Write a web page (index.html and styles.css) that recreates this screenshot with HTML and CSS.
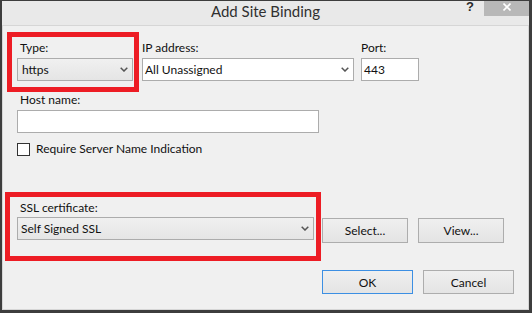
FILE: index.html
```html
<!DOCTYPE html>
<html lang="en">
<head>
    <meta charset="UTF-8">
    <meta name="viewport" content="width=device-width, initial-scale=1.0">
    <title>Add Site Binding</title>
    <link rel="stylesheet" href="styles.css">
</head>
<body>

    <div class="window">
        <div class="titlebar">
            <span></span>
            <div class="title">Add Site Binding</div>
            <div class="caption-buttons">
                <span class="help">?</span>
                <span class="close">
                    <svg width="8" height="8" viewBox="0 0 8 8">
                        <path d="M0.5 0.5 L7.5 7.5 M7.5 0.5 L0.5 7.5" stroke="#fff" stroke-width="1.6" fill="none"/>
                    </svg>
                </span>
            </div>
        </div>

        <div class="content">
            <div class="row-top">
                <div class="highlight type-box">
                    <div class="field-label">Type:</div>
                    <div class="combo combo-gray type-combo">
                        <span>https</span>
                        <svg class="chevron" width="8" height="5" viewBox="0 0 8 5"><polyline points="0.7,0.7 4,4 7.3,0.7" fill="none" stroke="#555" stroke-width="1.5"/></svg>
                    </div>
                </div>
                <div class="field ip-field">
                    <div class="field-label flush">IP address:</div>
                    <div class="combo combo-white ip-combo">
                        <span>All Unassigned</span>
                        <svg class="chevron" width="8" height="5" viewBox="0 0 8 5"><polyline points="0.7,0.7 4,4 7.3,0.7" fill="none" stroke="#555" stroke-width="1.5"/></svg>
                    </div>
                </div>
                <div class="field port-field">
                    <div class="field-label flush">Port:</div>
                    <div class="textbox port-input">443</div>
                </div>
            </div>

            <div class="host">
                <div class="field-label">Host name:</div>
                <div class="textbox host-input"></div>
            </div>

            <div class="check">
                <span class="checkbox"></span>
                <span class="check-text">Require Server Name Indication</span>
            </div>

            <div class="row-ssl">
                <div class="highlight ssl-box">
                    <div class="field-label">SSL certificate:</div>
                    <div class="combo combo-gray ssl-combo">
                        <span>Self Signed SSL</span>
                        <svg class="chevron" width="8" height="5" viewBox="0 0 8 5"><polyline points="0.7,0.7 4,4 7.3,0.7" fill="none" stroke="#555" stroke-width="1.5"/></svg>
                    </div>
                </div>
                <button class="btn btn-side">Select...</button>
                <button class="btn btn-side">View...</button>
            </div>

            <div class="row-actions">
                <button class="btn btn-action default">OK</button>
                <button class="btn btn-action">Cancel</button>
            </div>
        </div>
    </div>

</body>
</html>
```

FILE: styles.css
```css
body {
    margin: 0;
    padding: 0;
    background-color: #3d3d3d;
    font-family: 'Lato', 'Liberation Sans', sans-serif;
    font-size: 12px;
    color: #111;
}
.window {
    width: 532px;
    height: 313px;
    box-sizing: border-box;
    border-style: solid;
    border-color: #3d3d3d;
    border-width: 1px 3px 3px 2px;
    display: flex;
    flex-direction: column;
    background-color: #e9e9e9;
}
.titlebar {
    height: 24px;
    display: grid;
    grid-template-columns: 1fr auto 1fr;
}
.title {
    font-size: 15px;
    line-height: 20px;
    color: #303030;
}
.caption-buttons {
    justify-self: end;
    display: flex;
    align-items: flex-start;
}
.help {
    font-family: 'Liberation Sans', sans-serif;
    font-weight: bold;
    font-size: 13px;
    line-height: 11px;
    color: #2a2a2a;
    margin-right: 10px;
}
.close {
    width: 45px;
    height: 15px;
    background-color: #b8b8b8;
    display: flex;
    justify-content: center;
    align-items: flex-start;
    padding-top: 2px;
    box-sizing: border-box;
}
.content {
    flex: 1;
    background-color: #f0f0f0;
    border: 1px solid #d6d6d6;
}
.field-label {
    line-height: 15px;
    padding-left: 3px;
}
.field-label.flush {
    padding-left: 0;
}
.highlight {
    border: 5px solid #ed1c24;
}
.combo {
    height: 23px;
    box-sizing: border-box;
    border: 1px solid #acacac;
    display: flex;
    align-items: center;
    justify-content: space-between;
    line-height: 15px;
}
.combo-gray {
    background: linear-gradient(#f0f0f0, #e5e5e5);
    padding-left: 4px;
}
.combo-white {
    background-color: #fff;
    padding-left: 2px;
}
.chevron {
    margin-right: 4px;
}
.textbox {
    height: 23px;
    box-sizing: border-box;
    border: 1px solid #acacac;
    background-color: #fff;
    padding-left: 2px;
    line-height: 21px;
}

/* first row */
.row-top {
    display: flex;
    align-items: flex-start;
    margin-top: 6px;
    padding-left: 4px;
}
.type-box {
    padding: 3px 1px 6px 5px;
}
.type-box .combo {
    margin-top: 3px;
}
.type-combo {
    width: 116px;
}
.field {
    margin-top: 8px;
}
.field .combo, .field .textbox {
    margin-top: 3px;
}
.ip-field {
    margin-left: 3px;
}
.ip-combo {
    width: 212px;
}
.port-field {
    margin-left: 7px;
}
.port-input {
    width: 58px;
}

/* host name */
.host {
    padding-left: 14px;
}
.host-input {
    width: 302px;
    margin-top: 3px;
}
.check {
    display: flex;
    align-items: flex-start;
    margin-top: 9px;
    padding-left: 14px;
}
.checkbox {
    width: 13px;
    height: 13px;
    box-sizing: border-box;
    border: 1px solid #333;
    background-color: #fff;
    margin-top: 1px;
}
.check-text {
    line-height: 15px;
    margin-left: 6px;
    margin-top: -1px;
}

/* ssl row */
.row-ssl {
    display: flex;
    align-items: flex-start;
    margin-top: 36px;
    padding-left: 2px;
}
.ssl-box {
    padding: 3px 2px 16px 7px;
}
.ssl-combo {
    width: 297px;
    margin-top: 2px;
    padding-left: 3px;
}
.btn {
    font-family: 'Lato', 'Liberation Sans', sans-serif;
    font-size: 12px;
    color: #111;
    background: linear-gradient(#efefef, #e4e4e4);
    border: 1px solid #adadad;
    padding: 0;
    box-sizing: border-box;
}
.btn-side {
    width: 86px;
    height: 25px;
    margin-top: 26px;
    margin-left: 10px;
}
.btn-side:first-of-type {
    margin-left: 1px;
}

/* action buttons */
.row-actions {
    display: flex;
    justify-content: flex-end;
    gap: 10px;
    margin-top: 9px;
    padding-right: 14px;
}
.btn-action {
    width: 91px;
    height: 24px;
}
.btn-action.default {
    border-color: #3c8fe3;
}
```
